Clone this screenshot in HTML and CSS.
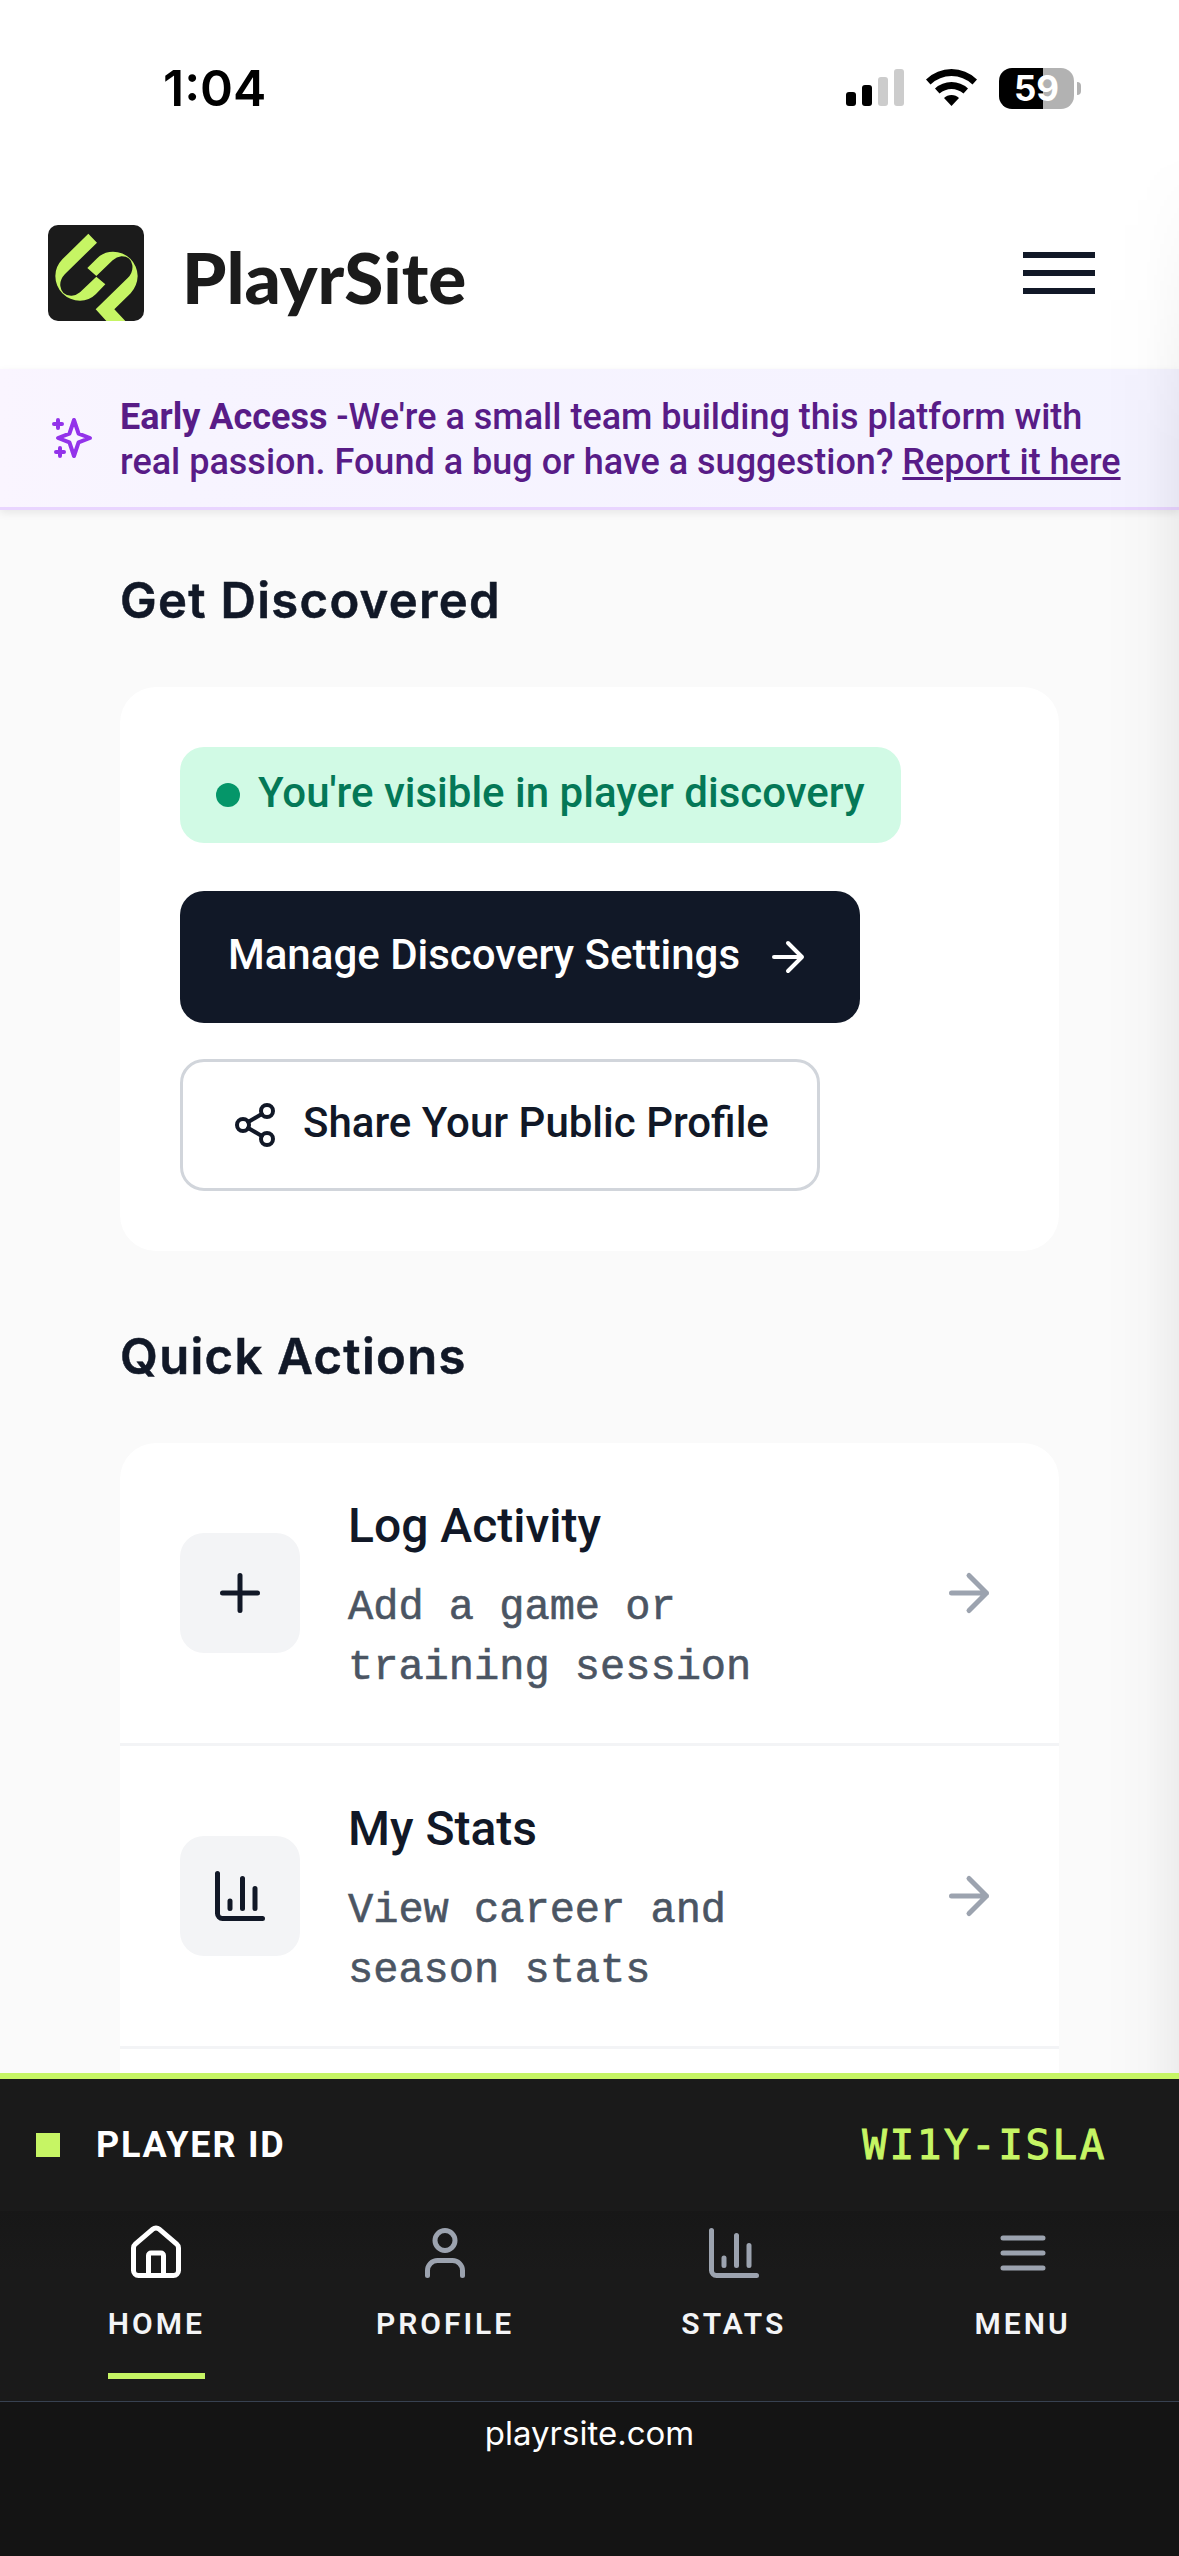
FILE: index.html
```html
<!DOCTYPE html>
<html lang="en">
<head>
    <meta charset="UTF-8">
    <meta name="viewport" content="width=device-width, initial-scale=1.0">
    <title>PlayrSite</title>
    <link rel="stylesheet" href="styles.css">
</head>
<body>
    <div class="app">
        <div class="status-bar">
            <span class="clock">1:04</span>
            <div class="status-icons">
                <svg class="signal" viewBox="0 0 58 38">
                    <rect x="0" y="23" width="10" height="14" rx="3"/>
                    <rect x="16" y="16" width="10" height="21" rx="3"/>
                    <rect class="off" x="32" y="8" width="10" height="29" rx="3"/>
                    <rect class="off" x="48" y="0" width="10" height="37" rx="3"/>
                </svg>
                <svg class="wifi" viewBox="0 0 51 38">
                    <path d="M0 10.500Q11 0 25.500 0T51 10.500L46.500 15.500Q37.500 7 25.500 7T4.500 15.500Z"/>
                    <path d="M9 19.500Q16 13 25.500 13T42 19.500L37.500 24.500Q32 20 25.500 20T13.500 24.500Z"/>
                    <path d="M18 29Q21 26 25.500 26T33 29L25.500 37Z"/>
                </svg>
                <div class="battery"><span>59</span></div>
                <i class="battery-tip"></i>
            </div>
        </div>

        <header class="header">
            <div class="brand">
                <svg class="brand-mark" viewBox="84 75 288 288">
                    <rect x="84" y="75" width="288" height="288" rx="30" fill="#1b1b1b"/>
                    <g fill="#c6f564">
                        <path d="M205 101L231 128L135 222Q119 239 121 258Q125 288 155 287Q170 286 180 277L229 230L256 253L228 282Q208 302 180 302A74 74 0 0 1 106 228Q106 200 127 178Z"/>
                        <path d="M229 228L202 204L230 176Q250 155 279 155A74 74 0 0 1 353 228Q352 257 332 280L283 328L316 363H259L227 328L323 234Q340 217 337 195Q332 168 304 169Q290 170 278 181Z"/>
                    </g>
                </svg>
                <span class="brand-name">PlayrSite</span>
            </div>
            <div class="hamburger"><i></i><i></i><i></i></div>
        </header>

        <div class="notice">
            <svg class="icon notice-icon" viewBox="0 0 24 24">
                <path d="M5 3v4M3 5h4M6 17v4m-2-2h4m5-16l2.286 6.857L21 12l-5.714 2.143L13 21l-2.286-6.857L5 12l5.714-2.143L13 3z"/>
            </svg>
            <p><strong>Early Access</strong> -We're a small team building this platform with<br>real passion. Found a bug or have a suggestion? <a href="#">Report it here</a></p>
        </div>

        <main class="content">
            <h2>Get Discovered</h2>
            <section class="card discover">
                <div class="badge"><i class="dot"></i><span>You're visible in player discovery</span></div>
                <a class="button dark" href="#">
                    <span>Manage Discovery Settings</span>
                    <svg class="icon" viewBox="0 0 24 24"><path d="M5 12h14M12 5l7 7-7 7"/></svg>
                </a>
                <a class="button light" href="#">
                    <svg class="icon" viewBox="0 0 24 24">
                        <circle cx="18" cy="5" r="3"/><circle cx="6" cy="12" r="3"/><circle cx="18" cy="19" r="3"/>
                        <path d="M8.590 13.510l6.830 3.980M15.410 6.510l-6.820 3.980"/>
                    </svg>
                    <span>Share Your Public Profile</span>
                </a>
            </section>

            <h2>Quick Actions</h2>
            <section class="card actions">
                <a class="action" href="#">
                    <div class="action-icon">
                        <svg class="icon" viewBox="0 0 24 24"><path d="M5 12h14M12 5v14"/></svg>
                    </div>
                    <div class="action-text">
                        <h3>Log Activity</h3>
                        <p>Add a game or training session</p>
                    </div>
                    <svg class="icon chevron" viewBox="0 0 24 24"><path d="M5 12h14M12 5l7 7-7 7"/></svg>
                </a>
                <a class="action" href="#">
                    <div class="action-icon">
                        <svg class="icon" viewBox="0 0 24 24"><path d="M3 3v16a2 2 0 0 0 2 2h16M8 17v-3M13 17V5M18 17V9"/></svg>
                    </div>
                    <div class="action-text">
                        <h3>My Stats</h3>
                        <p>View career and season stats</p>
                    </div>
                    <svg class="icon chevron" viewBox="0 0 24 24"><path d="M5 12h14M12 5l7 7-7 7"/></svg>
                </a>
            </section>
        </main>

        <footer class="bottom">
            <div class="player-id">
                <i class="square"></i>
                <span class="id-label">PLAYER ID</span>
                <span class="id-code">WI1Y-ISLA</span>
            </div>
            <nav class="tabs">
                <a class="tab active" href="#">
                    <svg class="icon" viewBox="0 0 24 24">
                        <path d="M15 21v-8a1 1 0 0 0-1-1h-4a1 1 0 0 0-1 1v8"/>
                        <path d="M3 10a2 2 0 0 1 .709-1.528l7-5.999a2 2 0 0 1 2.582 0l7 5.999A2 2 0 0 1 21 10v9a2 2 0 0 1-2 2H5a2 2 0 0 1-2-2z"/>
                    </svg>
                    <span>HOME</span>
                </a>
                <a class="tab" href="#">
                    <svg class="icon" viewBox="0 0 24 24"><path d="M19 21v-2a4 4 0 0 0-4-4H9a4 4 0 0 0-4 4v2"/><circle cx="12" cy="7" r="4"/></svg>
                    <span>PROFILE</span>
                </a>
                <a class="tab" href="#">
                    <svg class="icon" viewBox="0 0 24 24"><path d="M3 3v16a2 2 0 0 0 2 2h16M8 17v-3M13 17V5M18 17V9"/></svg>
                    <span>STATS</span>
                </a>
                <a class="tab" href="#">
                    <svg class="icon" viewBox="0 0 24 24"><path d="M4 6h16M4 12h16M4 18h16"/></svg>
                    <span>MENU</span>
                </a>
            </nav>
            <div class="address">playrsite.com</div>
        </footer>
        <div class="drawer-shadow"></div>
    </div>
</body>
</html>
```
FILE: styles.css
```css
* {
    box-sizing: border-box;
}
body {
    margin: 0;
    font-family: Roboto, sans-serif;
    color: #111827;
    background: #fafafa;
}
h2, h3, p {
    margin: 0;
}
a {
    color: inherit;
    text-decoration: none;
}
.app {
    position: relative;
    display: flex;
    flex-direction: column;
    width: 1179px;
    height: 2556px;
    overflow: hidden;
}
.icon {
    flex: none;
    fill: none;
    stroke: currentColor;
    stroke-width: 2;
    stroke-linecap: round;
    stroke-linejoin: round;
}

/* status bar */
.status-bar {
    flex: none;
    display: flex;
    justify-content: space-between;
    height: 177px;
    padding: 58px 98px 0 163px;
    background: #fff;
    color: #000;
}
.clock {
    font: 600 50px/60px Inter, sans-serif;
}
.status-icons {
    display: flex;
    align-items: center;
    height: 60px;
}
.signal {
    width: 58px;
    height: 38px;
    margin-right: 22px;
}
.signal .off {
    fill: #ccc;
}
.wifi {
    width: 51px;
    height: 38px;
    margin-right: 22px;
}
.battery {
    width: 75px;
    height: 41px;
    border-radius: 13px;
    background: linear-gradient(90deg, #000 44px, #b2b2b2 44px);
    color: #fff;
    font: 700 35px/41px Inter, sans-serif;
    text-align: center;
}
.battery-tip {
    width: 4px;
    height: 13px;
    margin-left: 3px;
    border-radius: 0 4px 4px 0;
    background: #b2b2b2;
}

/* header */
.header {
    flex: none;
    display: flex;
    justify-content: space-between;
    align-items: center;
    height: 192px;
    padding: 0 84px 0 48px;
    background: #fff;
}
.brand {
    display: flex;
    align-items: center;
}
.brand-mark {
    width: 96px;
    height: 96px;
}
.brand-name {
    margin: 8px 0 0 38px;
    color: #1b1b1b;
    font: 900 71px/84px Lato, sans-serif;
}
.hamburger {
    display: flex;
    flex-direction: column;
    gap: 12px;
}
.hamburger i {
    width: 72px;
    height: 6px;
    background: #111827;
}

/* early access notice */
.notice {
    flex: none;
    display: flex;
    align-items: center;
    height: 141px;
    padding: 0 48px;
    border-bottom: 3px solid #e9d5ff;
    background: linear-gradient(90deg, #faf5ff, #f7f4ff 15%, #f5f3ff 80%, #f4f3ff);
    box-shadow: 0 3px 8px rgba(0, 0, 0, 0.08);
    color: #581c87;
}
.notice-icon {
    width: 48px;
    height: 48px;
    margin-right: 24px;
    color: #9333ea;
}
.notice p {
    padding-top: 4px;
    font-size: 36px;
    font-weight: 500;
    line-height: 45px;
    white-space: nowrap;
}
.notice strong {
    font-weight: 700;
}
.notice a {
    text-decoration: underline;
    text-decoration-thickness: 3px;
    text-underline-offset: 3px;
}

/* page content */
.content {
    flex: 1;
    display: flex;
    flex-direction: column;
    min-height: 0;
    padding: 55px 120px 0;
    overflow: hidden;
}
h2 {
    height: 72px;
    margin-bottom: 50px;
    font: 600 49px/72px Inter, sans-serif;
    letter-spacing: 1.3px;
    -webkit-text-stroke: 0.5px #111827;
}
.card {
    flex: none;
    border-radius: 36px;
    background: #fff;
}
.discover {
    display: flex;
    flex-direction: column;
    align-items: flex-start;
    height: 564px;
    margin-bottom: 70px;
    padding: 60px;
}
.badge {
    display: flex;
    align-items: center;
    height: 96px;
    margin-bottom: 48px;
    padding: 0 36px;
    border-radius: 24px;
    background: #d1fae5;
    color: #047857;
    font-size: 42px;
    font-weight: 500;
}
.badge span, .button span {
    padding-bottom: 5px;
}
.dot {
    width: 24px;
    height: 24px;
    margin-right: 18px;
    border-radius: 50%;
    background: #059669;
}
.button {
    display: flex;
    align-items: center;
    gap: 24px;
    height: 132px;
    padding: 0 48px;
    border-radius: 24px;
    font-size: 42px;
    font-weight: 500;
}
.button .icon {
    width: 48px;
    height: 48px;
}
.dark {
    margin-bottom: 36px;
    background: #111827;
    color: #fff;
}
.light {
    border: 3px solid #d1d5db;
}
.actions {
    min-height: 909px;
}
.action {
    display: flex;
    align-items: center;
    height: 303px;
    padding: 0 60px;
    border-bottom: 3px solid #f3f4f6;
}
.action-icon {
    display: flex;
    align-items: center;
    justify-content: center;
    width: 120px;
    height: 120px;
    margin-right: 48px;
    border-radius: 24px;
    background: #f3f4f6;
}
.action .icon {
    width: 60px;
    height: 60px;
}
.action-text {
    flex: 1;
    padding-top: 7px;
}
h3 {
    margin-bottom: 22px;
    font-size: 48px;
    font-weight: 500;
    line-height: 60px;
}
.action p {
    width: 430px;
    color: #4b5563;
    font: 42px/60px "Liberation Mono", monospace;
    -webkit-text-stroke: 0.6px #4b5563;
}
.chevron {
    color: #9ca3af;
}

/* bottom bars */
.bottom {
    flex: none;
    height: 483px;
    border-top: 6px solid #c6f564;
    background: #1a1a1a;
    color: #fff;
}
.player-id {
    display: flex;
    align-items: center;
    height: 132px;
    padding: 0 72px 0 36px;
}
.square {
    width: 24px;
    height: 24px;
    background: #c6f564;
}
.id-label {
    margin-left: 36px;
    font-size: 36px;
    font-weight: 700;
    letter-spacing: 1.8px;
}
.id-code {
    margin-left: auto;
    color: #c6f564;
    font: 41px "DejaVu Sans Mono", monospace;
    letter-spacing: 2.5px;
    -webkit-text-stroke: 1px #c6f564;
}
.tabs {
    display: grid;
    grid-template-columns: repeat(4, 1fr);
    height: 191px;
    padding: 0 12px;
    border-bottom: 1px solid #374151;
    background: linear-gradient(#171717, #1a1a1a 60px);
}
.tab {
    display: flex;
    flex-direction: column;
    align-items: center;
    padding-top: 12px;
}
.tab .icon {
    width: 60px;
    height: 60px;
    color: #9ca3af;
}
.tab.active .icon {
    color: #fff;
}
.tab span {
    height: 96px;
    padding-top: 18px;
    color: #f3f4f6;
    font-size: 30px;
    font-weight: 600;
    line-height: 45px;
    letter-spacing: 3px;
}
.tab.active span {
    border-bottom: 6px solid #c6f564;
}
.address {
    height: 154px;
    padding-top: 11px;
    background: #141414;
    font: 400 33px/40px Inter, sans-serif;
    text-align: center;
}

/* soft edge of the closed side drawer */
.drawer-shadow {
    position: absolute;
    top: 150px;
    right: 0;
    width: 75px;
    height: 1923px;
    background: linear-gradient(90deg, transparent, rgba(0, 0, 0, 0.012) 55%, rgba(0, 0, 0, 0.05));
    mask-image: linear-gradient(transparent, #000 300px);
    pointer-events: none;
}
```
